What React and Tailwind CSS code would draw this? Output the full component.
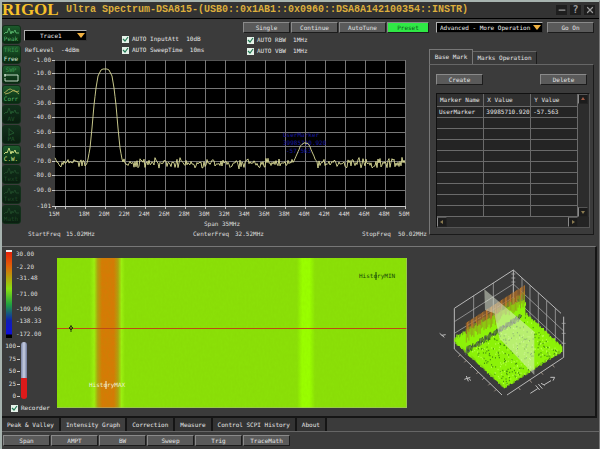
import React, { useState } from 'react';
import { Minus, X } from 'lucide-react';

const yTicks = ['-1.00', '-10.0', '-20.0', '-30.0', '-40.0', '-50.0', '-60.0', '-70.0', '-80.0', '-90.0', '-101'];
const tickY = [5, 18, 33, 48, 62, 77, 91, 106, 120, 135, 151];
const xTicks = ['18M', '20M', '22M', '24M', '26M', '28M', '30M', '32M', '34M', '36M', '38M', '40M', '42M', '44M', '46M', '48M', '50M'];

const toolIcons = [
  { label: 'Peak', art: 'wave', color: '#58b56c', dim: false },
  { label: 'Free', art: 'trig', color: '#d5ead6', dim: false },
  { label: '', art: 'swp', color: '#58b56c', dim: false },
  { label: 'Corr', art: 'corr', color: '#58b56c', dim: false },
  { label: 'AV', art: 'wave', color: '#245a30', dim: true },
  { label: 'PA', art: 'play', color: '#245a30', dim: true },
  { label: 'C.W.', art: 'wave', color: '#d9e88a', dim: false },
  { label: 'Text', art: 'wave', color: '#1f4a28', dim: true },
  { label: 'Text', art: 'wave', color: '#1f4a28', dim: true },
  { label: 'Math', art: 'wave', color: '#1f4a28', dim: true },
];

const markers = [{ name: 'UserMarker', x: '39985710.920', y: '-57.563' }];

const bottomTabs = ['Peak & Valley', 'Intensity Graph', 'Correction', 'Measure', 'Control SCPI History', 'About'];
const bottomButtons = ['Span', 'AMPT', 'BW', 'Sweep', 'Trig', 'TraceMath'];

// small seeded generator so the noise is the same on every render
const createRandom = (seed) => {
  let s = seed;
  return () => {
    s = (s * 16807) % 2147483647;
    return s / 2147483647;
  };
};

const mainPeak = [[0, 14], [2, 14], [4, 15], [7, 21], [9, 33], [11, 50], [13, 73], [15, 93], [17, 104]];
const sidePeak = [[0, 88], [3, 89], [5, 92], [8, 99], [10, 104], [12, 107]];

const peakHeight = (peak, d) => {
  for (let i = 1; i < peak.length; i++) {
    if (d <= peak[i][0]) {
      const [x0, y0] = peak[i - 1];
      const [x1, y1] = peak[i];
      return y0 + ((d - x0) / (x1 - x0)) * (y1 - y0);
    }
  }
  return null;
};

const buildTrace = () => {
  const rand = createRandom(77);
  const points = [];
  for (let x = 31; x <= 381; x++) {
    const main = peakHeight(mainPeak, Math.abs(x - 81));
    const side = peakHeight(sidePeak, Math.abs(x - 281));
    const noise = 108 + (rand() + rand() - 1) * 6;
    let y = noise;
    if (main !== null) y = main;
    else if (side !== null) y = side + (rand() - 0.5);
    points.push(`${x},${y.toFixed(1)}`);
  }
  return points.join(' ');
};

const trace = buildTrace();

const buildSurface = () => {
  const rand = createRandom(4211);
  const specks = [];
  const spikes = [];
  const ridge = [];
  const gap = [];
  for (let i = 0; i < 330; i++) {
    const u = rand();
    const v = rand();
    const x = 118 + u * 165 + v * 104;
    const y = 298 - u * 100 + v * 108;
    specks.push({ x, y, dark: rand() > 0.45 });
  }
  // ragged outline along the four floor edges
  for (let i = 0; i <= 44; i++) {
    const t = i / 44;
    spikes.push([72 + t * 148, 272 + t * 138]);
    spikes.push([222 + t * 170, 408 - t * 108]);
    spikes.push([285 + t * 104, 202 + t * 96]);
    spikes.push([78 + t * 205, 264 - t * 100]);
  }
  for (let i = 0; i <= 46; i++) {
    const t = i / 46;
    ridge.push({ x: 106 + t * 174, y: 222 - t * 112, h: 12 + rand() * 22 });
    gap.push({ x: 108 + t * 164, y: 302 - t * 102, h: 4 + rand() * 9 });
  }
  return { specks, spikes: spikes.map(([x, y]) => ({ x, y, h: 6 + rand() * 10 })), ridge, gap };
};

const surface = buildSurface();

const ToolIcon = ({ item }) => (
  <button
    type="button"
    aria-label={item.label || 'Sweep'}
    className={`h-[19px] w-[19px] rounded-[3px] border border-[#12301a] ${
      item.dim ? 'bg-linear-to-b from-[#12301b] to-[#0a1f10]' : 'bg-linear-to-b from-[#1d5a2c] to-[#082a10]'
    }`}
  >
    <svg viewBox="0 0 17 17" className="block h-full w-full" fill="none" stroke={item.color} strokeWidth="0.9">
      {item.art === 'wave' && <path d="M1 8 L3 6 L4 7 L6 2 L8 8 L9 5 L10 7 L12 4 L13 7 L16 7" />}
      {item.art === 'corr' && <path d="M1 7 C3 6 5 3 7 3 S11 7 16 5 M2 8 L6 7 L11 4 L16 8" stroke="#b9b65e" />}
      {item.art === 'play' && <path d="M6 2 V10 M6 3 L11 7 L6 9" />}
      {item.art === 'swp' && <path d="M2 9 H15 V15 H2 V12 M1 9 L3 9 M2 8 V11" stroke="#d5ead6" />}
      {item.art === 'trig' && (
        <text x="8" y="6" textAnchor="middle" fontSize="6" fill="#3d9450" stroke="none">TRIG</text>
      )}
      {item.art === 'swp' && (
        <text x="8" y="6" textAnchor="middle" fontSize="6" fill="#3d9450" stroke="none">SWP</text>
      )}
      <text x="8" y="15" textAnchor="middle" fontSize="6" fill={item.color} stroke="none">{item.label}</text>
    </svg>
  </button>
);

const PanelButton = ({ children, width = 'w-[47px]', colors = 'bg-[#5a5a5a] text-[#e4e4e4]' }) => (
  <button
    type="button"
    className={`h-[11px] border border-t-[#8a8a8a] border-l-[#8a8a8a] border-r-[#1c1c1c] border-b-[#1c1c1c] text-center leading-[8px] ${width} ${colors}`}
  >
    {children}
  </button>
);

const DropDown = ({ label, options, className, selectClass }) => (
  <div className={`relative ${className}`}>
    <select
      aria-label={label}
      className={`block h-[11px] w-full appearance-none border border-t-[#b0b0b0] border-l-[#b0b0b0] border-r-[#333] border-b-[#333] bg-black leading-[8px] text-[#ececec] ${selectClass}`}
    >
      {options.map((option) => (
        <option key={option}>{option}</option>
      ))}
    </select>
    <svg viewBox="0 0 8 5" className="pointer-events-none absolute top-[3px] right-[2px] h-[5px] w-[8px]">
      <path d="M0 0 H8 L4 5 Z" fill="#f0b040" />
    </svg>
  </div>
);

const Check = ({ children }) => (
  <label className="flex h-[8px] items-center gap-[3px] whitespace-pre leading-[8px]">
    <input type="checkbox" defaultChecked className="peer sr-only" />
    <svg viewBox="0 0 7 7" className="h-[7px] w-[7px] bg-[#e6f2ea]">
      <path d="M1 3 L3 5 L6 1" fill="none" stroke="#257a55" strokeWidth="1.2" />
    </svg>
    {children}
  </label>
);

const SpectrumChart = () => (
  <svg viewBox="0 0 405 191" className="block w-full" fontSize="6" fill="#dedede">
    <rect x="31" y="5" width="350" height="146" fill="#000" />
    <g stroke="#777" strokeWidth="1" shapeRendering="crispEdges">
      {tickY.slice(0, 10).map((y) => (
        <path key={y} d={`M31 ${y} H381`} stroke={y === 5 ? '#555' : '#777'} />
      ))}
      <path d="M41 5 V151" />
      {xTicks.map((t, i) => (
        <path key={t} d={`M${61 + i * 20} 5 V151`} />
      ))}
    </g>
    <g stroke="#c8c8c8" strokeWidth="1" shapeRendering="crispEdges">
      <path d="M31 151 H381 M31 151 V154 M41 151 V154" />
      {tickY.map((y) => (
        <path key={y} d={`M28 ${y} H31`} />
      ))}
      {xTicks.map((t, i) => (
        <path key={t} d={`M${61 + i * 20} 151 V154`} />
      ))}
    </g>
    {yTicks.map((t, i) => (
      <text key={t} x="27" y={tickY[i] + 2} textAnchor="end">{t}</text>
    ))}
    <text x="30" y="161" textAnchor="middle">15M</text>
    {xTicks.map((t, i) => (
      <text key={t} x={60 + i * 20} y="161" textAnchor="middle">{t}</text>
    ))}
    <g fill="#1818a0">
      <text x="259" y="82">UserMarker</text>
      <text x="259" y="90">39985710.920</text>
      <text x="262" y="98">-57.563</text>
    </g>
    <polyline points={trace} fill="none" stroke="#dede9a" strokeWidth="0.9" />
    <text x="198" y="171" textAnchor="middle">Span 35MHz</text>
    <text x="4" y="181">StartFreq</text>
    <text x="42" y="181">15.02MHz</text>
    <text x="169" y="181">CenterFreq</text>
    <text x="211" y="181">32.52MHz</text>
    <text x="338" y="181">StopFreq</text>
    <text x="374" y="181">50.02MHz</text>
  </svg>
);

const ScrollButton = ({ label, d, color }) => (
  <button
    type="button"
    aria-label={label}
    className="h-[10px] w-[10px] border border-t-[#555] border-l-[#8a8a8a] border-r-[#222] border-b-[#222] bg-[#1c1c1c]"
  >
    <svg viewBox="0 0 8 8" className="block h-[8px] w-[8px]">
      <path d={d} fill={color} />
    </svg>
  </button>
);

const MarkerTable = () => (
  <div className="grid grid-cols-[1fr_11px] border border-t-[#111] border-l-[#111] border-r-[#555] border-b-[#555] bg-[#242424]">
    <table className="w-full table-fixed border-collapse text-left leading-[8px]">
      <thead>
        <tr className="h-[12px] bg-[#303030]">
          {['Marker Name', 'X Value', 'Y Value'].map((h) => (
            <th key={h} className="border-r border-b border-[#6a6a6a] px-[3px] font-normal whitespace-nowrap">{h}</th>
          ))}
        </tr>
      </thead>
      <tbody>
        {Array.from({ length: 10 }, (_, i) => {
          const row = markers[i] || {};
          return (
            <tr key={i} className="h-[11px]">
              {[row.name, row.x, row.y].map((cell, c) => (
                <td key={c} className="border-r border-b border-[#6a6a6a] px-[2px]">{cell}</td>
              ))}
            </tr>
          );
        })}
      </tbody>
    </table>
    <div className="flex flex-col justify-between bg-[#2c2c2c]">
      <ScrollButton label="Scroll up" d="M2 5 L4 2 L6 5 Z" color="#a05a44" />
      <ScrollButton label="Scroll down" d="M2 3 L4 6 L6 3 Z" color="#8a7a50" />
    </div>
    <div className="flex justify-between bg-[#2a2a2a]">
      <ScrollButton label="Scroll left" d="M5 2 L2 4 L5 6 Z" color="#8a7a50" />
      <ScrollButton label="Scroll right" d="M3 2 L6 4 L3 6 Z" color="#8a7a50" />
    </div>
  </div>
);

const ScaleBars = () => {
  const labels = [['30.00', 8], ['-2.20', 21], ['-31.48', 32], ['-71.00', 48], ['-109.06', 63], ['-138.33', 75], ['-172.00', 88]];
  const levels = [['100', 99], ['75', 112], ['50', 124], ['25', 137], ['0', 149]];
  return (
    <svg viewBox="0 0 57 155" className="block h-[155px] w-[57px]" fontSize="6" fill="#dedede">
      <defs>
        <linearGradient id="scale" x1="0" y1="0" x2="0" y2="1">
          <stop offset="0" stopColor="#e81808" />
          <stop offset="0.18" stopColor="#e06008" />
          <stop offset="0.44" stopColor="#8ae010" />
          <stop offset="0.62" stopColor="#20a040" />
          <stop offset="0.8" stopColor="#1020b0" />
          <stop offset="0.95" stopColor="#1010d8" />
          <stop offset="0.97" stopColor="#000" />
        </linearGradient>
        <linearGradient id="tube" x1="0" y1="0" x2="1" y2="0">
          <stop offset="0" stopColor="#7c86a8" />
          <stop offset="0.5" stopColor="#c8d0e4" />
          <stop offset="1" stopColor="#6c7698" />
        </linearGradient>
      </defs>
      <rect x="4" y="3" width="6" height="88" fill="url(#scale)" />
      <rect x="4" y="3" width="6" height="2" fill="#eee" />
      {labels.map(([t, y]) => (
        <text key={t} x="14" y={y + 1}>{t}</text>
      ))}
      <rect x="19" y="95" width="6" height="56" rx="3" fill="url(#tube)" />
      <path d="M19 131 H25 V149 Q25 152 22 152 Q19 152 19 149 Z" fill="#dc1a1a" />
      {levels.map(([t, y]) => (
        <g key={t}>
          <text x="14" y={y + 2} textAnchor="end">{t}</text>
          <path d={`M15 ${y} H18`} stroke="#c8c8c8" shapeRendering="crispEdges" />
        </g>
      ))}
    </svg>
  );
};

const IntensityMap = () => (
  <svg viewBox="0 0 350 150" className="block w-full" fontSize="6">
    <defs>
      <linearGradient id="hot" x1="0" y1="0" x2="1" y2="0">
        <stop offset="0" stopColor="#8be008" />
        <stop offset="0.12" stopColor="#9cf010" />
        <stop offset="0.22" stopColor="#b0a010" />
        <stop offset="0.34" stopColor="#d67a06" />
        <stop offset="0.68" stopColor="#d67a06" />
        <stop offset="0.8" stopColor="#b0a010" />
        <stop offset="0.9" stopColor="#9cf010" />
        <stop offset="1" stopColor="#8be008" />
      </linearGradient>
      <linearGradient id="warm" x1="0" y1="0" x2="1" y2="0">
        <stop offset="0" stopColor="#8be008" />
        <stop offset="0.3" stopColor="#9aff00" />
        <stop offset="0.7" stopColor="#9aff00" />
        <stop offset="1" stopColor="#8be008" />
      </linearGradient>
      <filter id="grain" x="0" y="0" width="1" height="1">
        <feTurbulence type="fractalNoise" baseFrequency="0.5 0.25" numOctaves="2" seed="3" />
        <feColorMatrix values="0 0 0 0 0.2  0 0 0 0 0.5  0 0 0 0 0  0.5 0 0 0 -0.15" />
      </filter>
    </defs>
    <rect width="350" height="150" fill="#8be008" />
    <rect x="33" width="35" height="150" fill="url(#hot)" />
    <rect x="240" width="18" height="150" fill="url(#warm)" />
    <rect width="350" height="150" filter="url(#grain)" opacity="0.35" />
    <rect y="70" width="350" height="1" fill="#c04a14" />
    <path d="M14 67 V74 M12 70 L14 68 L16 70 L14 72 Z" fill="none" stroke="#26400a" />
    <text x="32" y="129" fill="#f0f0d8">HistoryMAX</text>
    <path d="M49 123 V131" stroke="#f0f0d8" />
    <text x="302" y="20" fill="#16480a">HistoryMIN</text>
    <path d="M319 14 V22" stroke="#16480a" />
    <path d="M350 0 V150 M0 150 H350" stroke="#a8b48c" />
  </svg>
);

const SurfacePlot = () => (
  <svg viewBox="0 0 492 480" className="block w-full" fill="none">
    <g stroke="#b8b8b8" strokeWidth="3">
      <path d="M70 297 V175 L247 60 L390 190 M247 60 V190 M398 200 V322 M398 322 L228 435 M70 297 L213 435" />
      <path d="M128 137 V250 M187 98 V220 M70 215 L247 102 M70 250 L247 142 M247 102 L398 243 M247 142 L398 282" strokeWidth="2" />
      <path d="M273 84 V200 M297 106 V216 M322 128 V232 M347 152 V252 M373 175 V272" strokeWidth="2" />
      <path d="M241 72 H253 M241 84 H253 M241 96 H253 M392 220 H404 M392 250 H404 M392 280 H404" strokeWidth="2" />
    </g>
    <polygon points="72,272 118,238 250,160 282,150 284,200 390,298 222,410 108,304" fill="#8cf208" />
    <g stroke="#8cf208" strokeWidth="4">
      {surface.spikes.map((p, i) => (
        <path key={i} d={`M${p.x} ${p.y - p.h} V${p.y + p.h / 2}`} />
      ))}
    </g>
    {/* carrier ridge along the time axis */}
    <g strokeWidth="3">
      {surface.ridge.map((p, i) => (
        <g key={i}>
          <path d={`M${p.x} ${p.y + 14} V${p.y + 26 + p.h}`} stroke="#8fae18" />
          <path d={`M${p.x} ${p.y - 4} V${p.y + p.h}`} stroke={i % 3 ? '#b8752a' : '#94602a'} />
        </g>
      ))}
      {surface.gap.map((p, i) => (
        <path key={i} d={`M${p.x} ${p.y - p.h} L${p.x - 4} ${p.y + p.h}`} stroke={i % 3 ? '#3f5a2c' : '#5c6660'} />
      ))}
    </g>
    {surface.specks.map((p, i) => (
      <path key={i} d={`M${p.x} ${p.y} v4`} stroke={p.dark ? '#3f8a10' : '#b4ff48'} strokeWidth="3" />
    ))}
    <polygon points="160,118 310,245 310,375 205,265 190,190 162,180" fill="#e4ecd8" opacity="0.5" />
    <g stroke="#c8b8a8" strokeWidth="2">
      <path d="M88 314 l-6 6 M106 331 l-6 6 M124 348 l-6 6 M142 366 l-6 6 M160 383 l-6 6 M178 400 l-6 6 M196 418 l-6 6" />
      <path d="M262 412 l6 8 M296 390 l6 8 M330 366 l6 8 M364 344 l6 8" />
    </g>
    {/* axis pointers */}
    <g stroke="#c0c0c0" strokeWidth="3">
      <path d="M26 250 L40 262 M32 256 L44 254" />
      <path d="M100 388 L118 382 M106 378 L112 394 M112 384 L120 392" />
      <path d="M298 430 L320 416 M314 406 L326 420 M322 402 L334 416 M330 400 L342 406 M340 404 L360 392 M358 382 H371 L366 392" />
    </g>
  </svg>
);

export default function App() {
  const [activeTab, setActiveTab] = useState('Intensity Graph');

  return (
    <div className="min-h-screen border-t-2 border-r border-l-2 border-[#a8b4b0] border-r-[#777] bg-[#3b3b3b] font-['DejaVu_Sans_Mono','Liberation_Mono',monospace] text-[6px] leading-[8px] text-[#e6e6e6]">
      <header className="flex h-[17px] items-center border-b border-black bg-[#333]">
        <span className="w-[64px] font-['Liberation_Serif',serif] text-[17px] leading-[16px] font-bold text-[#f5c02a]">RIGOL</span>
        <h1 className="flex-1 font-['Liberation_Mono',monospace] text-[10px] leading-[16px] font-bold whitespace-nowrap text-[#dcae3c]">
          Ultra Spectrum-DSA815-(USB0::0x1AB1::0x0960::DSA8A142100354::INSTR)
        </h1>
        <div className="flex gap-[3px] pr-[4px] text-[#9a9a9a]">
          <button type="button" aria-label="Minimize" className="flex h-[10px] w-[11px] items-center justify-center bg-[#1e1e1e]">
            <Minus size={10} strokeWidth={3} />
          </button>
          <button type="button" aria-label="Help" className="h-[10px] w-[11px] bg-[#1e1e1e] text-center text-[10px] leading-[10px] font-bold">?</button>
          <button type="button" aria-label="Close" className="flex h-[10px] w-[11px] items-center justify-center bg-[#1e1e1e]">
            <X size={10} strokeWidth={3} />
          </button>
        </div>
      </header>

      <main className="flex">
        <nav className="flex w-[22px] flex-col gap-px pt-[6px]">
          {toolIcons.map((item, i) => (
            <ToolIcon key={i} item={item} />
          ))}
        </nav>

        <section className="min-w-0 flex-1">
          <div className="flex justify-between">
            <div className="w-[98px] pt-[11px]">
              <DropDown label="Trace" options={['Trace1']} className="w-[63px]" selectClass="pl-[15px]" />
              <p className="mt-[5px] whitespace-pre pl-px">RefLevel  -4dBm</p>
            </div>
            <div className="flex flex-1 flex-col gap-[3px] pt-[16px]">
              <Check>AUTO InputAtt  10dB</Check>
              <Check>AUTO SweepTime  10ms</Check>
            </div>
            <div className="flex flex-col gap-[3px] pt-[3px]">
              <div className="flex gap-px">
                <PanelButton>Single</PanelButton>
                <PanelButton>Continue</PanelButton>
                <PanelButton>AutoTune</PanelButton>
                <PanelButton width="w-[42px]" colors="bg-[#2fe845] text-[#0c5a1c]">Preset</PanelButton>
              </div>
              <div className="flex flex-col gap-[3px] pl-[4px]">
                <Check>AUTO RBW  1MHz</Check>
                <Check>AUTO VBW  1MHz</Check>
              </div>
            </div>
          </div>
          <SpectrumChart />
        </section>

        <aside className="w-[170px] pt-[3px] pr-[5px]">
          <div className="flex justify-between pl-[7px]">
            <DropDown
              label="Operation"
              options={['Advanced - More Operation']}
              className="w-[107px]"
              selectClass="pl-[3px] pr-[10px]"
            />
            <PanelButton>Go On</PanelButton>
          </div>
          <div className="mt-[16px] flex items-end">
            <button type="button" className="h-[15px] w-[44px] border-t border-r border-l border-[#777] text-center">Base Mark</button>
            <button type="button" className="h-[13px] w-[64px] border-t border-r border-t-[#666] border-r-[#1c1c1c] text-center">Marks Operation</button>
          </div>
          <div className="border border-t-[#666] border-l-[#777] border-r-[#1a1a1a] border-b-[#1a1a1a] pt-[9px] pr-[3px] pb-[6px] pl-[6px]">
            <div className="mb-[8px] flex justify-between pr-[3px]">
              <PanelButton>Create</PanelButton>
              <PanelButton>Delete</PanelButton>
            </div>
            <MarkerTable />
          </div>
        </aside>
      </main>

      <section className="mr-[2px] flex border-t border-r-2 border-b-2 border-t-[#777] border-r-[#151515] border-b-[#151515]">
        <div className="w-[55px]">
          <ScaleBars />
          <div className="mt-[2px] mb-[4px] pl-[9px]">
            <Check>Recorder</Check>
          </div>
        </div>
        <div className="min-w-0 flex-1 pt-[11px]">
          <IntensityMap />
        </div>
        <div className="w-[188px] pt-[3px] pl-[24px]">
          <SurfacePlot />
        </div>
      </section>

      <div className="flex border-b border-[#666]">
        {bottomTabs.map((tab) => (
          <button
            key={tab}
            type="button"
            onClick={() => setActiveTab(tab)}
            className={`h-[13px] border-r-2 border-[#151515] px-[5px] text-center whitespace-nowrap ${
              tab === activeTab ? 'bg-[#3f3f3f]' : 'bg-[#333]'
            }`}
          >
            {tab}
          </button>
        ))}
      </div>
      <div className="flex gap-px pt-[3px] pl-px">
        {bottomButtons.map((b) => (
          <PanelButton key={b}>{b}</PanelButton>
        ))}
      </div>
    </div>
  );
}
